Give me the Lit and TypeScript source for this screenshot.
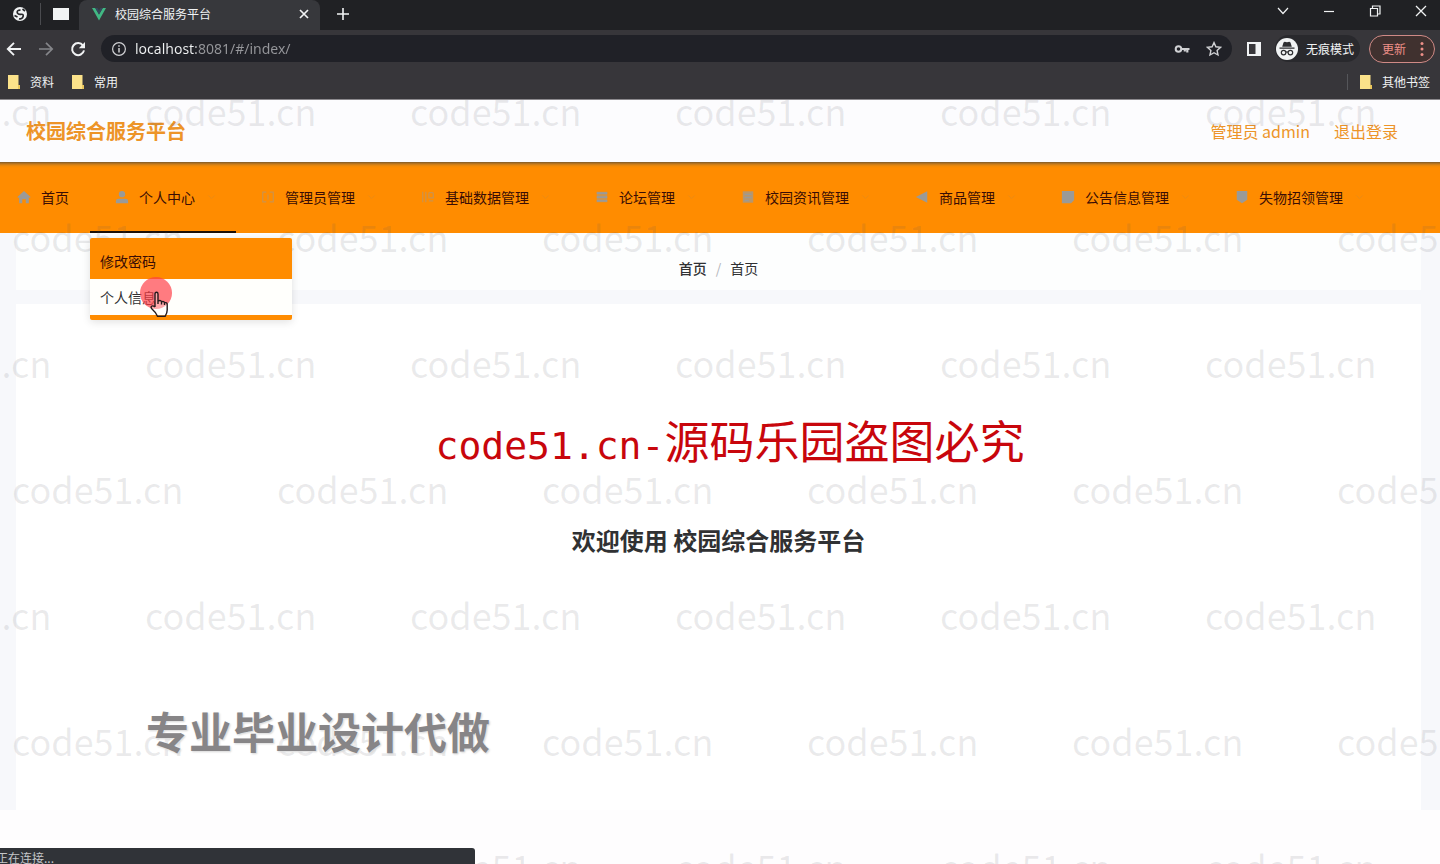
import { LitElement, html, css, svg, nothing } from "lit";
import { customElement, property } from "lit/decorators.js";
import { classMap } from "lit/directives/class-map.js";

const icons = {
  globe: svg`<circle cx="8" cy="8" r="7" fill="#f1f3f4"/><path d="M8.500 4.200Q5 4 5.200 6.300T9 8.300t1.500 3.500q-1.200 1.600-3.500.9M2.500 9.500l3 1.500M10.500 3l2.500 2" fill="none" stroke="#26272a" stroke-width="1.700"/>`,
  vue: svg`<path d="M1 2h3.200L8 8.600 11.800 2H15L8 14.500z" fill="#41b883"/><path d="M4.200 2h2.300L8 4.700 9.500 2h2.300L8 8.600z" fill="#35495e"/>`,
  close: svg`<path d="M4 4l8 8M12 4l-8 8" stroke="currentColor" stroke-width="1.700" fill="none"/>`,
  plus: svg`<path d="M8 2v12M2 8h12" stroke="currentColor" stroke-width="1.600" fill="none"/>`,
  down: svg`<path d="M3 5l5 5.500L13 5" stroke="currentColor" stroke-width="1.200" fill="none"/>`,
  min: svg`<path d="M3 8.500h10" stroke="currentColor" stroke-width="1.200" fill="none"/>`,
  restore: svg`<path d="M3.500 5.500h7v7.500h-7zM5.500 5.500v-2.500h7.500v8h-2.500" stroke="currentColor" stroke-width="1.200" fill="none"/>`,
  exit: svg`<path d="M3 3l10 10M13 3L3 13" stroke="currentColor" stroke-width="1.300" fill="none"/>`,
  back: svg`<path d="M15 8H2M8 1.800L1.800 8 8 14.200" stroke="currentColor" stroke-width="1.900" fill="none"/>`,
  forward: svg`<path d="M1 8h13M8 1.800L14.200 8 8 14.200" stroke="currentColor" stroke-width="1.700" fill="none"/>`,
  reload: svg`<path d="M13 4.600A6 6 0 1 0 14 9.400" stroke="currentColor" stroke-width="2" fill="none"/><path d="M15 1v6.200H8.800z" fill="currentColor"/>`,
  info: svg`<circle cx="8" cy="8" r="6.400" stroke="currentColor" stroke-width="1.200" fill="none"/><path d="M8 7v4.500M8 4.300v1.500" stroke="currentColor" stroke-width="1.500"/>`,
  key: svg`<circle cx="4.500" cy="8" r="2.800" stroke="currentColor" stroke-width="2" fill="none"/><path d="M7 8h8.500M13.300 8v3.500M10.800 8v2.500" stroke="currentColor" stroke-width="2.200" fill="none"/>`,
  star: svg`<path d="M8 1.600l1.900 4.200 4.600.5-3.400 3.100.9 4.600L8 11.700 4 14l.9-4.600L1.500 6.300l4.600-.5z" stroke="currentColor" stroke-width="1.400" fill="none"/>`,
  panel: svg`<path d="M1 1h14v14H1zM3 3v10h6.500V3z" fill="currentColor" fill-rule="evenodd"/>`,
  spy: svg`<circle cx="12" cy="12" r="11" fill="#f1f3f4"/><path d="M8.500 5.500l1.200-.8 2.300.5 2.300-.5 1.200.8 1.300 4.300H7.200zM4.500 10.500h15v1.300h-15z" fill="#2d2e31"/><circle cx="8.600" cy="15.600" r="2.300" fill="none" stroke="#2d2e31" stroke-width="1.200"/><circle cx="15.400" cy="15.600" r="2.300" fill="none" stroke="#2d2e31" stroke-width="1.200"/><path d="M10.900 15.300q1.100-.7 2.200 0" fill="none" stroke="#2d2e31" stroke-width="1.200"/>`,
  dots: svg`<circle cx="8" cy="2.500" r="1.500" fill="currentColor"/><circle cx="8" cy="8" r="1.500" fill="currentColor"/><circle cx="8" cy="13.500" r="1.500" fill="currentColor"/>`,
  folder: svg`<path d="M2 1h10.500v10H14V15H2z" fill="#fbe28a"/><path d="M12 11h2v4h-2z" fill="#e9c65c"/>`,
  home: svg`<path d="M8 1l7.500 7-1 1L13.500 8v7H10v-4.500H6V15H2.500V8l-1 1-1-1z" fill="currentColor"/>`,
  user: svg`<circle cx="8" cy="4.800" r="3.600" fill="currentColor"/><path d="M1 15v-2.500Q1 10 4 10h8q3 0 3 2.500V15z" fill="currentColor"/>`,
  ticket: svg`<path d="M6 2.500H2v11h4M10 2.500h4v11h-4M8 5v6" fill="none" stroke="currentColor" stroke-width="1.300"/>`,
  columns: svg`<path d="M2 2v12M5.500 2v12M9 3h5M9 3v6h5V3M9 12.500h5" fill="none" stroke="currentColor" stroke-width="1.400"/>`,
  list: svg`<path d="M2 2h12v12H2z" fill="currentColor" opacity=".55"/><path d="M2 3.500h12M2 8h12M2 12.500h12" stroke="currentColor" stroke-width="2"/>`,
  doc: svg`<path d="M2 1.500h12v13H2z" fill="currentColor" opacity=".7"/><path d="M4 5h8M4 8.500h8M4 12h5" stroke="currentColor" stroke-width="1.600"/>`,
  horn: svg`<path d="M1 8l13-6.500V14.500z" fill="currentColor"/>`,
  grid: svg`<path d="M1 1h14v10.500L11.500 15H1z" fill="currentColor"/>`,
  badge: svg`<path d="M2 1h12v10l-6 4-6-4z" fill="currentColor"/>`,
  caret: svg`<path d="M3 5.500L8 10.500l5-5" stroke="currentColor" stroke-width="1.200" fill="none"/>`,
};
type IconName = keyof typeof icons;

@customElement("ui-icon")
export class UiIcon extends LitElement {
  @property() name: IconName = "home";
  static styles = css`
    :host { display: inline-flex; flex: none; width: 16px; height: 16px; }
    .glyph { display: block; width: 100%; height: 100%; }
  `;
  render() {
    return html`<svg class="glyph" viewBox=${this.name === "spy" ? "0 0 24 24" : "0 0 16 16"} aria-hidden="true">${icons[this.name]}</svg>`;
  }
}

@customElement("browser-bar")
export class BrowserBar extends LitElement {
  static styles = css`
    :host { display: block; background: #37363a; color: #f1f3f4; font: 12px/16px "Noto Sans CJK SC", sans-serif; border-bottom: 1px solid #8b898d; }
    button { all: unset; display: inline-flex; align-items: center; justify-content: center; }
    .strip { display: flex; height: 30px; background: #202124; }
    .pinned { display: flex; align-items: center; width: 79px; box-sizing: border-box; padding: 0 10px 3px 12px; gap: 12px; }
    .rule { width: 1px; height: 22px; background: #4a4b4f; }
    .page { width: 17px; height: 12px; background: #f1f3f4; }
    .tab { display: flex; align-items: center; width: 241px; box-sizing: border-box; padding: 0 8px 2px 12px; gap: 8px; background: #37383c; border-radius: 8px 8px 0 0; }
    .name { flex: 1; white-space: nowrap; }
    .new { width: 46px; padding-bottom: 3px; }
    .window { display: flex; margin-left: auto; padding: 0 11px 9px 0; gap: 30px; }
    .tools { display: flex; align-items: center; height: 37px; padding: 0 5px 0 6px; }
    .nav { display: flex; gap: 16px; }
    .dim { color: #85868a; }
    .omni { display: flex; flex: 1; align-items: center; height: 27px; margin: 0 14px 0 15px; padding: 0 10px 0 10px; gap: 8px; border-radius: 14px; background: #202127; color: #d0d1d4; }
    .url { all: unset; flex: 1; font: 14px/20px "Noto Sans", "Open Sans", sans-serif; color: transparent; background: linear-gradient(90deg, #f1f3f4 61px, #96979b 61px); -webkit-background-clip: text; background-clip: text; }
    .omniact { display: flex; gap: 16px; }
    .mode { display: flex; align-items: center; gap: 7px; height: 27px; margin: 0 9px 0 13px; padding-right: 6px; border-radius: 14px; background: #29292d; }
    .spy { width: 24px; height: 24px; }
    .mode, .update { font-size: 12px; white-space: nowrap; }
    .update { height: 26px; padding: 0 4px 0 12px; gap: 8px; border: 1px solid #cf8a86; border-radius: 15px; background: #40312f; color: #ee8f88; }
    .marks { display: flex; align-items: center; height: 32px; padding: 0 10px 2px 6px; gap: 16px; box-sizing: border-box; }
    .mark { display: flex; align-items: center; gap: 8px; color: inherit; text-decoration: none; }
    .other { margin-left: auto; padding-left: 10px; border-left: 1px solid #55565a; }
  `;
  render() {
    const btn = (label: string, name: IconName, cls = "") =>
      html`<button class=${cls} aria-label=${label}><ui-icon name=${name}></ui-icon></button>`;
    return html`
      <div class="strip">
        <div class="pinned"><ui-icon name="globe"></ui-icon><span class="rule"></span><span class="page"></span></div>
        <div class="tab"><ui-icon name="vue"></ui-icon><span class="name">校园综合服务平台</span>${btn("关闭", "close")}</div>
        ${btn("新标签页", "plus", "new")}
        <div class="window">${btn("搜索标签页", "down")}${btn("最小化", "min")}${btn("还原", "restore")}${btn("关闭窗口", "exit")}</div>
      </div>
      <div class="tools">
        <div class="nav">${btn("后退", "back")}${btn("前进", "forward", "dim")}${btn("刷新", "reload")}</div>
        <div class="omni">
          <ui-icon name="info"></ui-icon>
          <input class="url" type="text" aria-label="地址" .value=${"localhost:8081/#/index/"} />
          <span class="omniact">${btn("密码", "key")}${btn("收藏", "star")}</span>
        </div>
        ${btn("侧边栏", "panel")}
        <span class="mode"><ui-icon class="spy" name="spy"></ui-icon>无痕模式</span>
        <button class="update">更新<ui-icon name="dots"></ui-icon></button>
      </div>
      <div class="marks">
        <a class="mark" href="#"><ui-icon name="folder"></ui-icon>资料</a>
        <a class="mark" href="#"><ui-icon name="folder"></ui-icon>常用</a>
        <a class="mark other" href="#"><ui-icon name="folder"></ui-icon>其他书签</a>
      </div>
    `;
  }
}

@customElement("main-menu")
export class MainMenu extends LitElement {
  static styles = css`
    :host { display: block; font: 14px/20px "Noto Sans CJK SC", sans-serif; }
    .menu { display: flex; height: 71px; margin: 0; padding: 0; list-style: none; background: linear-gradient(#7d5a2a, #c47a1c 2px, #f08a08 4px, #ff8c00 6px); }
    .item { position: relative; box-sizing: border-box; border-bottom: 2px solid transparent; }
    .item.open { border-color: #1c1008; }
    .link { display: flex; align-items: center; height: 100%; box-sizing: border-box; padding: 0 18px 0 25px; gap: 10px; color: #3a0d05; text-decoration: none; white-space: nowrap; }
    .link.first { padding: 0 21px 0 17px; }
    .icon { width: 14px; height: 14px; color: #9a9a98; }
    .icon.faint { opacity: .5; }
    .caret { width: 13px; height: 10px; color: #b98a4a; opacity: .35; }
    .drop { position: absolute; z-index: 2; top: 76px; left: 0; width: 202px; box-sizing: border-box; margin: 0; padding: 5px 0; list-style: none; background: #ff8c00; border-radius: 2px; box-shadow: 0 2px 8px rgba(0, 0, 0, .12); }
    .sub { display: block; padding: 8px 10px; color: #3a0d05; text-decoration: none; }
    .sub.hover { background: #fffffc; color: #303133; }
    .pointer { display: contents; }
    .click { position: absolute; left: 50px; top: 39px; width: 32px; height: 32px; border-radius: 50%; background: rgba(255, 60, 70, .68); }
    .hand { position: absolute; left: 59px; top: 53px; width: 20px; height: 27px; }
  `;
  private items: { text: string; icon: IconName; faint?: boolean }[] = [
    { text: "首页", icon: "home" },
    { text: "个人中心", icon: "user" },
    { text: "管理员管理", icon: "ticket", faint: true },
    { text: "基础数据管理", icon: "columns", faint: true },
    { text: "论坛管理", icon: "list" },
    { text: "校园资讯管理", icon: "doc" },
    { text: "商品管理", icon: "horn" },
    { text: "公告信息管理", icon: "grid" },
    { text: "失物招领管理", icon: "badge" },
  ];
  render() {
    return html`<nav><ul class="menu">
      ${this.items.map((item, i) => html`
        <li class=${classMap({ item: true, open: i === 1 })}>
          <a class=${classMap({ link: true, first: i === 0 })} href="#">
            <ui-icon class=${classMap({ icon: true, faint: !!item.faint })} name=${item.icon}></ui-icon>${item.text}
            ${i ? html`<ui-icon class="caret" name="caret"></ui-icon>` : nothing}
          </a>
          ${i === 1 ? this.dropdown() : nothing}
        </li>`)}
    </ul></nav>`;
  }
  private dropdown() {
    return html`
      <ul class="drop">
        <li><a class="sub" href="#">修改密码</a></li>
        <li>
          <a class="sub hover" href="#">个人信息</a>
          <span class="pointer"><span class="click"></span>
          <svg class="hand" viewBox="0 0 20 27" aria-hidden="true">
            <path d="M6 16V3q0-1.700 1.500-1.700T9 3v7q3-1.200 3.500.8 2.500-.8 3 1 2.700-.6 2.700 1.600V19q0 3-2 6.200H8.500Q7 21.500 3 18q-1.600-1.800-.4-2.800T6 16z" fill="#fff" fill-opacity=".35"/>
            <path d="M6 16V3q0-1.700 1.500-1.700T9 3v7M6 16q-2.200-1.800-3.400-.8T3 18q4 3.500 5.500 7.200h7.700q2-3.200 2-6.200v-5.600q0-2.200-2.700-1.600M9 10q3-1.200 3.500.8v2.700M12.500 10.800q2.500-.8 3 1v2.200M9 10v3" fill="none" stroke="#241a1c" stroke-width="1.400"/>
          </svg></span>
        </li>
      </ul>`;
  }
}

@customElement("water-marks")
export class WaterMarks extends LitElement {
  static styles = css`
    :host { display: flex; flex-direction: column; gap: 86px; overflow: hidden; pointer-events: none; }
    .row { display: flex; flex: none; height: 40px; margin-left: -120px; font: 36px/40px "Noto Sans CJK SC", sans-serif; color: rgba(90, 90, 100, .12); }
    .row.odd { margin-left: 12px; }
    .row:first-child { height: 30px; line-height: 20px; }
    .mark { flex: none; width: 265px; }
  `;
  render() {
    return html`${Array.from({ length: 7 }, (_, r) => html`
      <div class=${classMap({ row: true, odd: r % 2 === 1 })}>
        ${Array.from({ length: 6 }, () => html`<span class="mark">code51.cn</span>`)}
      </div>`)}`;
  }
}

@customElement("app-root")
export class AppRoot extends LitElement {
  static styles = css`
    :host { display: flex; flex-direction: column; min-height: 100vh; background: #fefdfe; font-family: "Noto Sans CJK SC", sans-serif; color: #303133; }
    .site { position: relative; display: flex; flex: 1; flex-direction: column; overflow: hidden; }
    .head { display: flex; align-items: center; justify-content: space-between; height: 62px; padding: 0 42px 0 26px; background: #fcfcfe; color: #ed9428; }
    .brand { margin: 0; font: 700 20px/28px "Noto Sans CJK SC", sans-serif; }
    .account { display: flex; gap: 24px; font-size: 16px; line-height: 24px; }
    .out { color: inherit; text-decoration: none; }
    .body { display: flex; flex: 1; flex-direction: column; margin-bottom: 54px; padding: 0 19px 0 16px; gap: 14px; background: #f7f8fb; }
    .crumbs { display: flex; justify-content: center; gap: 9px; padding: 25px 0 12px; background: #fdfefe; font-size: 14px; line-height: 20px; }
    .here { color: inherit; font-weight: 500; text-decoration: none; }
    .slash { color: #b4b6bc; }
    .panel { display: flex; flex: 1; flex-direction: column; align-items: center; padding-top: 218px; background: #fff; }
    .welcome { margin: 0; font: 700 24px/36px "Noto Sans CJK SC", sans-serif; }
    .marks { position: absolute; inset: 0; }
    .notice { position: absolute; top: 310px; left: 0; right: 20px; margin: 0 0 0 40px; text-align: center; font-size: 45px; font-weight: 400; line-height: 60px; color: #c8060c; }
    .mono { font-family: "DejaVu Sans Mono", monospace; font-size: 38px; }
    .ad { position: absolute; top: 600px; left: 146px; margin: 0; font-size: 43px; font-weight: 700; line-height: 60px; color: #878587; text-shadow: 0 0 2px #fff, 1px 1px 2px #ccc; }
    .status { position: absolute; left: 0; bottom: 0; width: 33%; height: 16px; box-sizing: border-box; padding-top: 2px; overflow: hidden; background: #303338; border-radius: 0 3px 0 0; color: #c4c6c9; font-size: 12px; line-height: 16px; text-indent: -4px; }
  `;
  render() {
    return html`
      <browser-bar></browser-bar>
      <div class="site">
        <header class="head">
          <h1 class="brand">校园综合服务平台</h1>
          <div class="account"><span>管理员 admin</span><a class="out" href="#">退出登录</a></div>
        </header>
        <main-menu></main-menu>
        <main class="body">
          <div class="crumbs"><a class="here" href="#">首页</a><span class="slash">/</span><span>首页</span></div>
          <section class="panel"><h2 class="welcome">欢迎使用 校园综合服务平台</h2></section>
        </main>
        <water-marks class="marks"></water-marks>
        <p class="notice"><span class="mono">code51.cn-</span>源码乐园盗图必究</p>
        <p class="ad">专业毕业设计代做</p>
        <div class="status">正在连接...</div>
      </div>
    `;
  }
}
